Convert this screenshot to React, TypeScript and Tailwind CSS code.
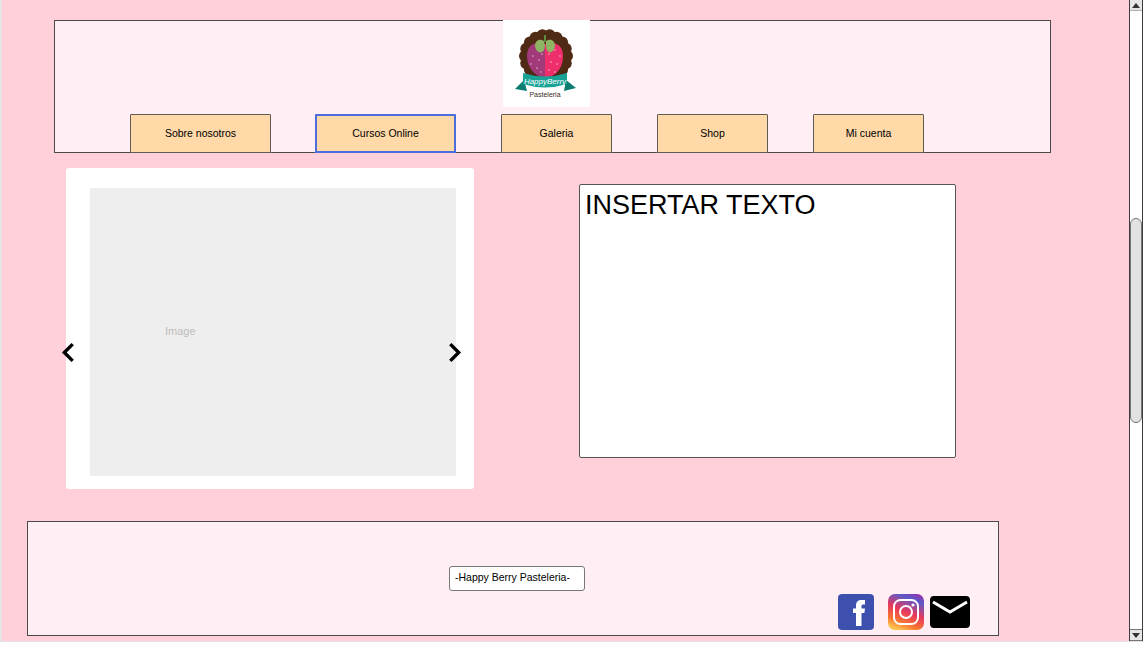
const font = "font-['Liberation_Sans',Arial,sans-serif]";

function NavButton({ label, width, active }: { label: string; width: string; active?: boolean }) {
  return (
    <div
      className={`${width} h-[39px] -mb-px flex items-center justify-center bg-[#ffd9a8] text-[10.5px] text-black rounded-t-[1px] ${
        active ? "border-2 border-[#4a6fdc]" : "border border-[#5f5a55]"
      }`}
    >
      {label}
    </div>
  );
}

function Logo() {
  const bumps = Array.from({ length: 18 }, (_, i) => {
    const a = (i / 18) * Math.PI * 2;
    return [43 + 21 * Math.cos(a), 36 + 21 * Math.sin(a)];
  });
  const dots = [
    [46, 34], [52, 30], [57, 36], [48, 42], [54, 44], [46, 50], [52, 52],
    [30, 36], [36, 40], [28, 44], [34, 48], [39, 34], [38, 52],
  ];
  return (
    <svg viewBox="0 0 87 87" className="w-[87px] h-[87px] block">
      <rect width="87" height="87" fill="#fff" />
      <g fill="#4f2a14">
        {bumps.map(([x, y]) => (
          <circle key={`${x}-${y}`} cx={x} cy={y} r="6" />
        ))}
        <circle cx="43" cy="36" r="22" />
      </g>
      <path d="M42 24 C32 21 24 25 24 36 C24 46 30 56 42 58 Z" fill="#a23a7a" />
      <path d="M42 24 C52 21 60 25 60 36 C60 46 55 56 42 58 Z" fill="#ee2f6b" />
      {dots.map(([x, y]) => (
        <circle key={`${x}:${y}`} cx={x} cy={y} r="0.7" fill="#fff" opacity="0.75" />
      ))}
      <path d="M41 21 C36 18 32 21 32 26 C33 33 41 36 42 26 Z" fill="#8db564" />
      <path d="M43 21 C48 18 52 21 52 26 C51 33 44 36 43 26 Z" fill="#8db564" />
      <rect x="41" y="15" width="2" height="7" fill="#5f8a3f" />
      <path d="M21 60 L12 69 L24 71 Z" fill="#0c7d73" />
      <path d="M63 60 L73 68 L61 71 Z" fill="#0c7d73" />
      <path d="M20 53 Q42 60 64 53 L64 64 Q42 71 20 64 Z" fill="#18a396" />
      <text x="42" y="63.5" textAnchor="middle" fontSize="8" fontStyle="italic" fill="#fff" fontFamily="Liberation Sans, sans-serif">
        HappyBerry
      </text>
      <text x="42" y="77" textAnchor="middle" fontSize="7" fill="#3d2c25" fontFamily="Liberation Sans, sans-serif">
        Pasteleria
      </text>
    </svg>
  );
}

function Socials() {
  return (
    <div className="flex items-start">
      <svg viewBox="0 0 36 36" className="w-[36px] h-[36px] block">
        <rect width="36" height="36" rx="4" fill="#3d50ad" />
        <path d="M18 32 V19 H15 V14.5 H18 V11.5 C18 8 20 6 23.5 6 H27 V10.5 H25 C23.7 10.5 23.5 11.2 23.5 12.3 V14.5 H27 L26.4 19 H23.5 V32 Z" fill="#fff" />
      </svg>
      <svg viewBox="0 0 36 36" className="w-[36px] h-[36px] block ml-[14px]">
        <defs>
          <linearGradient id="insta" x1="0.75" y1="0" x2="0.35" y2="1">
            <stop offset="0" stopColor="#8e35b0" />
            <stop offset="0.15" stopColor="#5a5ac8" />
            <stop offset="0.5" stopColor="#e8385f" />
            <stop offset="0.8" stopColor="#f8752f" />
            <stop offset="1" stopColor="#fdc04f" />
          </linearGradient>
        </defs>
        <rect width="36" height="36" rx="7" fill="url(#insta)" />
        <rect x="6" y="6" width="24" height="24" rx="6.5" fill="none" stroke="#fff" strokeWidth="2" />
        <circle cx="18" cy="18" r="6" fill="none" stroke="#fff" strokeWidth="2" />
        <circle cx="25" cy="11" r="1.6" fill="#fff" />
      </svg>
      <svg viewBox="0 0 40 32" className="w-[40px] h-[32px] block ml-[6px] mt-[2px]">
        <rect width="40" height="32" rx="4" fill="#000" />
        <path d="M3 6 L20 16 L37 6" fill="none" stroke="#fff" strokeWidth="3" />
      </svg>
    </div>
  );
}

function Scrollbar() {
  return (
    <div className="w-[15px] shrink-0 flex flex-col bg-white">
      <div className="w-[14px] flex-1 flex flex-col border-x border-[#3c3c3c]">
        <div className="h-[11px] flex items-center justify-center bg-[#e6e6e6] border-b border-[#b0b0b0]">
          <div className="w-0 h-0 border-x-[4px] border-x-transparent border-b-[5px] border-b-[#333]" />
        </div>
        <div className="flex-1 flex flex-col">
          <div className="h-[207px]" />
          <div className="h-[205px] bg-[#e2e2e2] border border-[#777] rounded-[6px]" />
          <div className="flex-1" />
        </div>
        <div className="h-[12px] flex items-center justify-center bg-[#e6e6e6] border-y border-[#777]">
          <div className="w-0 h-0 border-x-[4px] border-x-transparent border-t-[5px] border-t-[#333]" />
        </div>
      </div>
    </div>
  );
}

export default function App() {
  return (
    <div className={`${font} w-[1144px] h-[649px] overflow-hidden bg-white flex flex-col`}>
      <div className="h-[642px] flex border-b border-[#e4dfe0]">
        <div className="w-[2px] shrink-0 bg-[#e8e4e5]" />
        <div className="w-[1127px] shrink-0 bg-[#ffd0da] pt-[20px]">
          {/* header */}
          <div className="relative ml-[52px] w-[997px] h-[133px] bg-[#ffeef3] border border-[#4a4a4a] flex flex-col justify-end">
            <div className="absolute left-[448px] -top-px">
              <Logo />
            </div>
            <div className="flex items-end pl-[75px]">
              <NavButton label="Sobre nosotros" width="w-[141px]" />
              <div className="w-[44px]" />
              <NavButton label="Cursos Online" width="w-[141px]" active />
              <div className="w-[45px]" />
              <NavButton label="Galeria" width="w-[111px]" />
              <div className="w-[45px]" />
              <NavButton label="Shop" width="w-[111px]" />
              <div className="w-[45px]" />
              <NavButton label="Mi cuenta" width="w-[111px]" />
            </div>
          </div>

          {/* carousel and text */}
          <div className="flex items-start mt-[15px] ml-[64px] h-[322px]">
            <div className="relative w-[408px] h-[321px] bg-white rounded-[3px] pt-[20px] pl-[24px]">
              <div className="w-[366px] h-[288px] bg-[#eeeeee] rounded-[2px] pt-[137px] pl-[75px] text-[11px] leading-[13px] text-[#bdbdbd]">
                Image
              </div>
              <svg viewBox="0 0 16 20" className="absolute -left-[6px] top-[174px] w-[17px] h-[21px]">
                <path d="M12 2 L4 10 L12 18" fill="none" stroke="#000" strokeWidth="3.2" />
              </svg>
              <svg viewBox="0 0 16 20" className="absolute left-[380px] top-[174px] w-[17px] h-[21px]">
                <path d="M4 2 L12 10 L4 18" fill="none" stroke="#000" strokeWidth="3.2" />
              </svg>
            </div>
            <div className="ml-[105px] mt-[16px] w-[377px] h-[274px] bg-white border border-[#555] rounded-[2px] pl-[5px] pt-[2px] text-[27px] leading-[36px] text-black">
              INSERTAR TEXTO
            </div>
          </div>

          {/* footer */}
          <div className="ml-[25px] mt-[31px] w-[972px] h-[115px] bg-[#ffeef3] border border-[#4a4a4a] flex flex-col">
            <div className="ml-[421px] mt-[44px] w-[136px] h-[25px] bg-white border border-[#777] rounded-[3px] flex items-center pl-[5px] pb-px text-[10.5px] whitespace-nowrap text-black">
              -Happy Berry Pasteleria-
            </div>
            <div className="ml-[810px] mt-[3px]">
              <Socials />
            </div>
          </div>
        </div>
        <Scrollbar />
      </div>
    </div>
  );
}
